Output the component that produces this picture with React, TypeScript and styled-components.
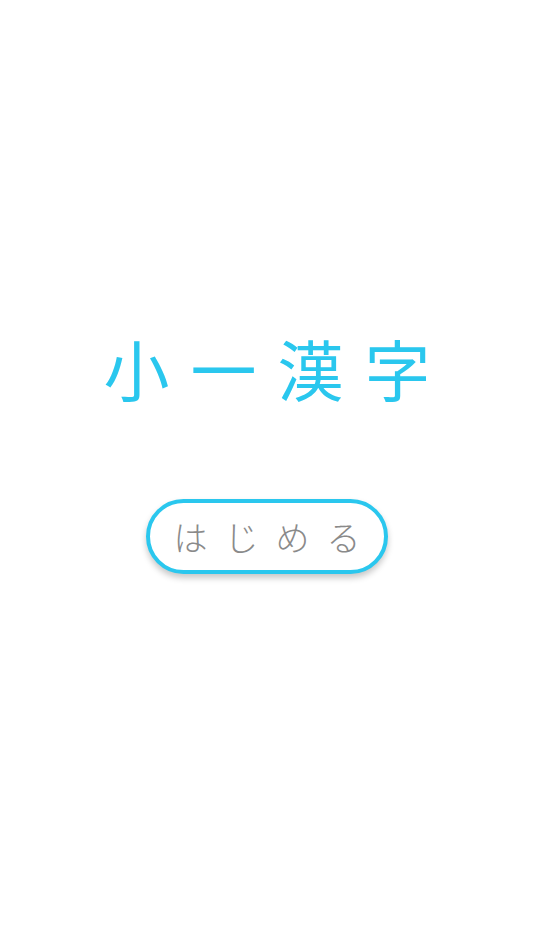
import styled, { createGlobalStyle } from "styled-components";

const GlobalStyle = createGlobalStyle`
  html, body {
    margin: 0;
    padding: 0;
    background: #ffffff;
  }
  body {
    font-family: "Noto Sans CJK JP", "Noto Sans", sans-serif;
  }
`;

const StyledScreen = styled.main`
  width: 534px;
  height: 950px;
  display: flex;
  flex-direction: column;
  align-items: center;
  padding-top: 334px;
  box-sizing: border-box;
`;

const StyledTitle = styled.h1`
  margin: 0;
  font-size: 66px;
  line-height: 66px;
  font-weight: 400;
  color: #2ac7ee;
  letter-spacing: 21px;
  padding-left: 21px;
`;

const StyledStartButton = styled.button`
  margin-top: 99px;
  width: 242px;
  height: 75px;
  border: 4px solid #2ac7ee;
  border-radius: 38px;
  background: #ffffff;
  box-shadow: 0 4px 6px rgb(0 0 0 / 22%);
  display: flex;
  align-items: center;
  justify-content: center;
  font-family: "Noto Sans CJK JP", "Noto Sans", sans-serif;
  font-size: 34px;
  font-weight: 300;
  color: #8a8a8a;
  letter-spacing: 17px;
  padding: 0 0 0 17px;
  cursor: pointer;
`;

export default function App() {
  return (
    <>
      <GlobalStyle />
      <StyledScreen>
        <StyledTitle>小一漢字</StyledTitle>
        <StyledStartButton>はじめる</StyledStartButton>
      </StyledScreen>
    </>
  );
}
